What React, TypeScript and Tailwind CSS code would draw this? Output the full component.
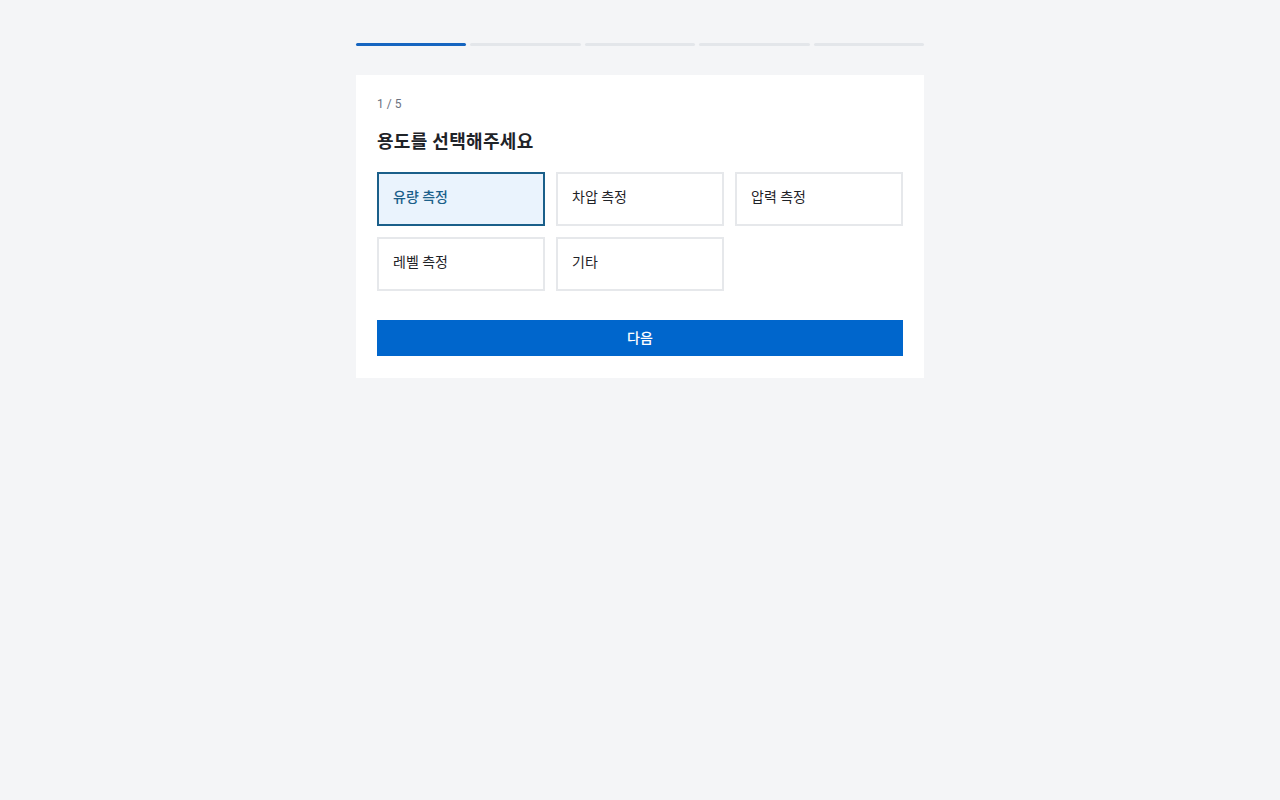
import { useState } from "react";

const options = ["유량 측정", "차압 측정", "압력 측정", "레벨 측정", "기타"];

export default function App() {
  const [selected, setSelected] = useState(0);
  const step = 1;

  return (
    <div
      className="min-h-screen bg-[#f4f5f7] pt-[43px]"
      style={{ fontFamily: 'Roboto, "Noto Sans CJK KR", sans-serif' }}
    >
      <div className="mx-auto w-[568px]">
        {/* progress */}
        <div className="flex gap-[4px]">
          {[1, 2, 3, 4, 5].map((n) => (
            <div
              key={n}
              className={`h-[3px] flex-1 rounded-full ${n <= step ? "bg-[#1565c0]" : "bg-[#e3e6ea]"}`}
            />
          ))}
        </div>

        <div className="mt-[29px] bg-white px-[21px] pt-[21px] pb-[22px]">
          <div className="text-[12px] leading-[16px] text-[#6b7280]">1 / 5</div>
          <h2 className="mt-[17px] text-[18px] leading-[26px] font-bold tracking-[0.3px] text-[#1f2328]">
            용도를 선택해주세요
          </h2>

          <div className="mt-[17px] grid grid-cols-3 gap-[11px]">
            {options.map((o, i) => (
              <button
                key={o}
                onClick={() => setSelected(i)}
                className={`h-[54px] border-2 pb-[3px] pl-[14px] text-left text-[14px] ${
                  selected === i
                    ? "border-[#1a5f8a] bg-[#eaf3fd] text-[#1a5f8a] font-medium"
                    : "border-[#e6e8eb] bg-white text-[#1f2328]"
                }`}
              >
                {o}
              </button>
            ))}
          </div>

          <button className="mt-[29px] h-[36px] w-full bg-[#0066cc] text-[14px] font-medium text-white">
            다음
          </button>
        </div>
      </div>
    </div>
  );
}
